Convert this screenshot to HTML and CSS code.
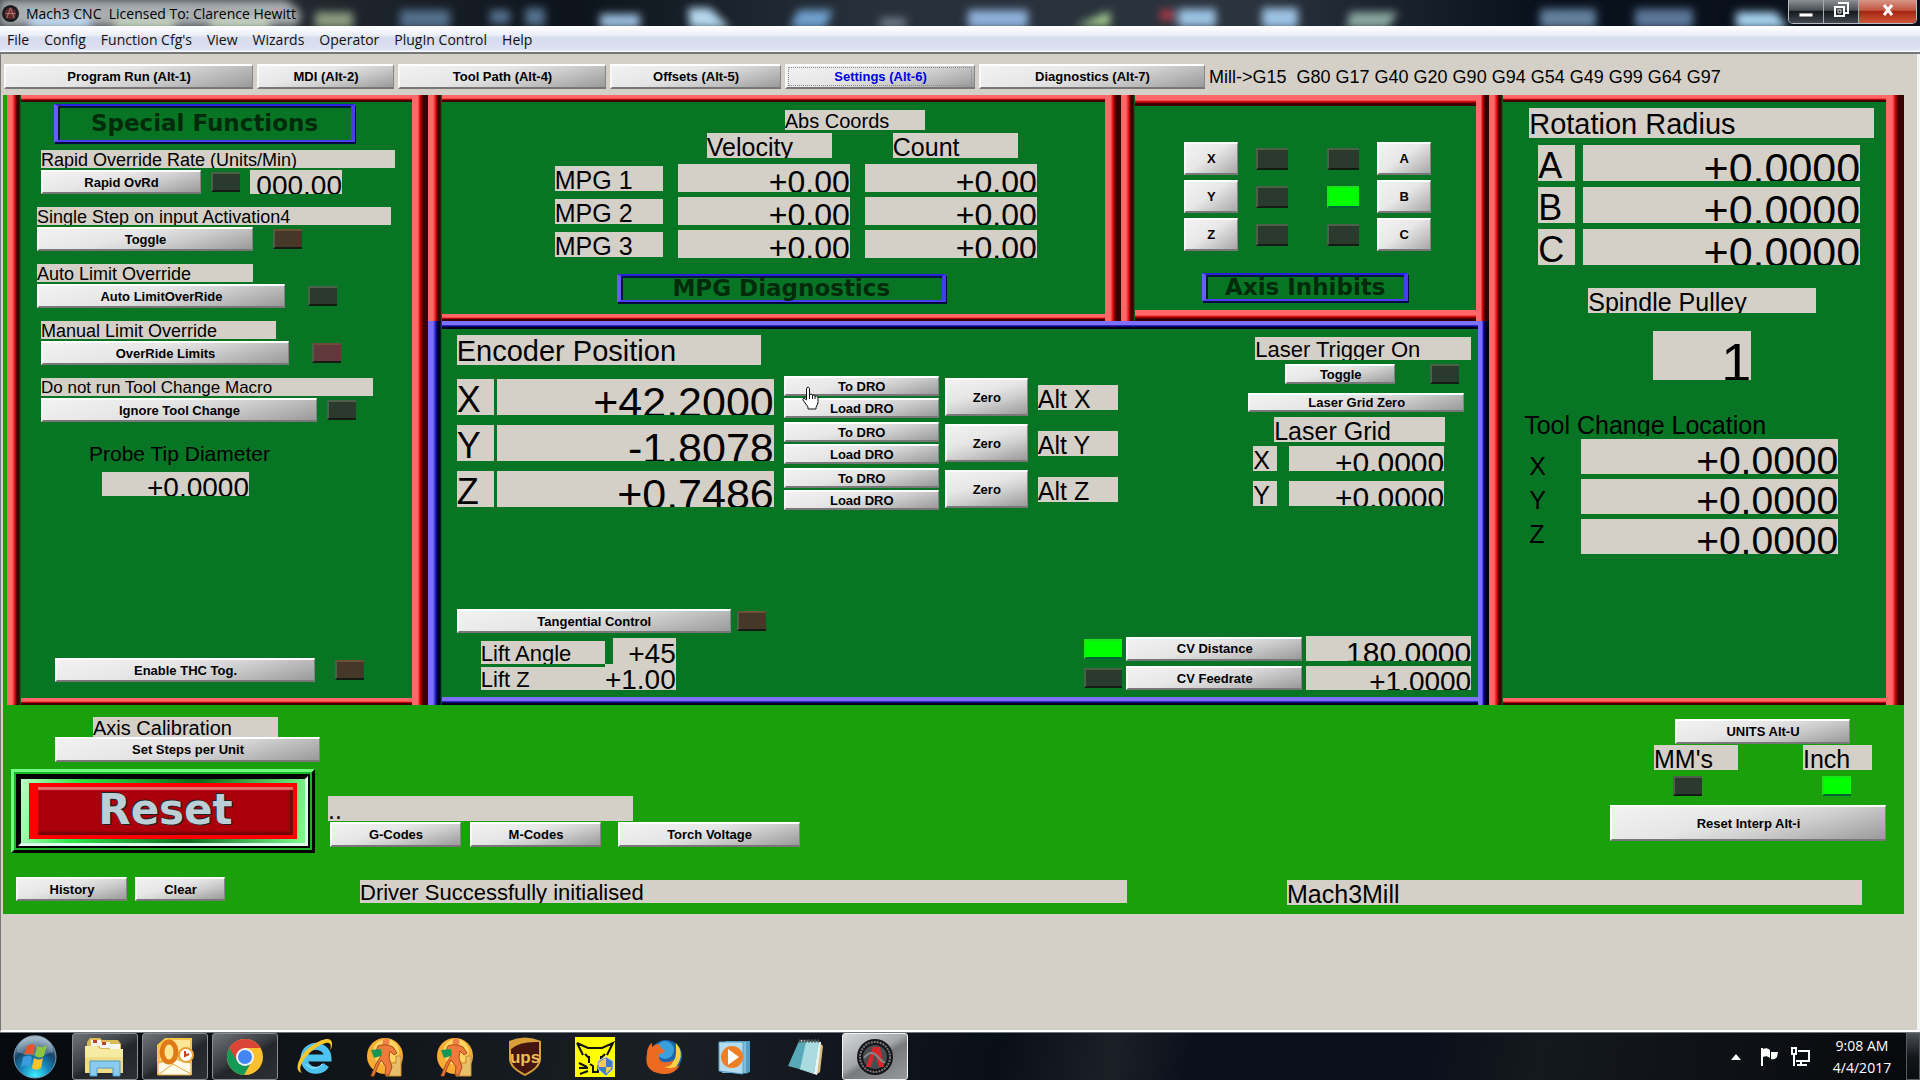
FILE: index.html
```html
<!DOCTYPE html>
<html lang="en">
<head>
  <meta charset="UTF-8">
  <meta name="viewport" content="width=device-width, initial-scale=1.0">
  <title>Mach3 CNC</title>
  <link rel="stylesheet" href="styles.css">
</head>
<body>
  <header class="titlebar">
    <svg class="titlebar-glass" viewBox="0 0 1920 26" preserveAspectRatio="none" aria-hidden="true">
      <defs>
        <filter id="soft" x="-20%" y="-50%" width="140%" height="200%"><feGaussianBlur stdDeviation="4"/></filter>
      </defs>
      <g filter="url(#soft)">
        <path d="M0 0H285Q310 14 295 26H0z" fill="#a9adb0"/>
        <path d="M30 17h60v12H30z" fill="#c4dcf4"/>
        <path d="M115 19h60v10h-60zM210 19h60v10h-60z" fill="#cddcc6"/>
        <path d="M315 12h38v16h-38z" fill="#8d9c80"/>
        <path d="M400 10h50v18h-50zM490 10h20v14h-20zM525 8h20v18h-20z" fill="#53708c"/>
        <path d="M600 14h40v14h-40z" fill="#9cc0de"/>
        <path d="M688 8h22l20 20h-40z" fill="#b5d8ef"/>
        <path d="M798 10h35l-8 18h-35z" fill="#6fa0cf"/>
        <path d="M880 18h26v10h-26z" fill="#6f7d89"/>
        <path d="M968 10h60v18h-60z" fill="#8fb1dc"/>
        <path d="M1075 26l35-15v15z" fill="#a4cc90"/>
        <path d="M1160 10h14v10h-14z" fill="#b23a48"/>
        <path d="M1178 9h38v18h-38zM1262 8h36v20h-36z" fill="#9cc3e4"/>
        <path d="M1350 12h48l-10 16h-42z" fill="#8aa7a0"/>
        <path d="M1540 9h56v19h-56z" fill="#64819e"/>
        <path d="M1635 9h58v19h-58z" fill="#5c789a"/>
        <path d="M1736 12h40l12 16h-52z" fill="#a7d2ef"/>
      </g>
    </svg>
    <svg class="app-icon" viewBox="0 0 20 20" aria-hidden="true">
      <circle cx="10" cy="10" r="9" fill="#1c1c1e"/>
      <circle cx="10" cy="10" r="6" fill="#5c2b2c"/>
      <path d="M6 15l4-11 4 11M5 10h10" fill="none" stroke="#b77" stroke-width="1"/>
    </svg>
    <span class="titlebar-text">Mach3 CNC&nbsp; Licensed To: Clarence Hewitt</span>
    <div class="window-controls">
      <button class="win-btn" aria-label="Minimize"><svg viewBox="0 0 20 20"><path d="M3 13h14v4H3z" fill="#fff" stroke="#333"/></svg></button>
      <button class="win-btn" aria-label="Restore"><svg viewBox="0 0 20 20"><path d="M7 3h10v10h-3M4 7h9v9H4z" fill="none" stroke="#fff" stroke-width="2"/><path d="M7 10h3v3H7z" fill="#222" stroke="#ddd"/></svg></button>
      <button class="win-btn win-btn-close" aria-label="Close"><svg viewBox="0 0 20 20"><path d="M6 5l8 10M14 5L6 15" stroke="#fff" stroke-width="3"/></svg></button>
    </div>
  </header>

  <nav class="menubar">
    <a href="#">File</a>
    <a href="#">Config</a>
    <a href="#">Function Cfg's</a>
    <a href="#">View</a>
    <a href="#">Wizards</a>
    <a href="#">Operator</a>
    <a href="#">PlugIn Control</a>
    <a href="#">Help</a>
  </nav>

  <main class="client">
    <div class="tabs">
      <button class="btn tab-run">Program Run (Alt-1)</button>
      <button class="btn tab-mdi">MDI (Alt-2)</button>
      <button class="btn tab-path">Tool Path (Alt-4)</button>
      <button class="btn tab-offsets">Offsets (Alt-5)</button>
      <button class="btn tab-settings active">Settings (Alt-6)</button>
      <button class="btn tab-diag">Diagnostics (Alt-7)</button>
      <span class="modes">Mill-&gt;G15&nbsp; G80 G17 G40 G20 G90 G94 G54 G49 G99 G64 G97</span>
    </div>

    <div class="screen">
      <div class="panels">
        <!-- Special functions -->
        <section class="frame special">
          <h2 class="badge badge-large">Special Functions</h2>
          <div class="functions">
            <div class="function indent">
              <span class="label w-354">Rapid Override Rate (Units/Min)</span>
              <div class="row">
                <button class="btn w-160">Rapid OvRd</button>
                <span class="led"></span>
                <output class="dro dro-28 w-92">000.00</output>
              </div>
            </div>
            <div class="function">
              <span class="label w-354">Single Step on input Activation4</span>
              <div class="row row-20">
                <button class="btn w-216">Toggle</button>
                <span class="led led-brown"></span>
              </div>
            </div>
            <div class="function">
              <span class="label w-216">Auto Limit Override</span>
              <div class="row row-24">
                <button class="btn w-248">Auto LimitOverRide</button>
                <span class="led"></span>
              </div>
            </div>
            <div class="function indent">
              <span class="label w-235">Manual Limit Override</span>
              <div class="row row-24">
                <button class="btn w-248">OverRide Limits</button>
                <span class="led led-red"></span>
              </div>
            </div>
            <div class="function indent">
              <span class="label label-17 w-332">Do not run Tool Change Macro</span>
              <div class="row">
                <button class="btn w-276">Ignore Tool Change</button>
                <span class="led"></span>
              </div>
            </div>
          </div>
          <div class="probe">
            <span class="label label-21 label-clear">Probe Tip Diameter</span>
            <output class="dro dro-28 w-147">+0.0000</output>
          </div>
          <div class="row row-20 thc">
            <button class="btn w-260">Enable THC Tog.</button>
            <span class="led led-brown"></span>
          </div>
        </section>

        <div class="middle">
          <div class="middle-top">
            <!-- MPG diagnostics -->
            <section class="frame mpg">
              <span class="label label-20 abs-coords">Abs Coords</span>
              <div class="mpg-heads">
                <span class="label label-25">Velocity</span>
                <span class="label label-25">Count</span>
              </div>
              <div class="mpg-grid">
                <span class="label label-25">MPG 1</span>
                <output class="dro dro-32">+0.00</output>
                <output class="dro dro-32">+0.00</output>
                <span class="label label-25">MPG 2</span>
                <output class="dro dro-32">+0.00</output>
                <output class="dro dro-32">+0.00</output>
                <span class="label label-25">MPG 3</span>
                <output class="dro dro-32">+0.00</output>
                <output class="dro dro-32">+0.00</output>
              </div>
              <h2 class="badge badge-mpg">MPG Diagnostics</h2>
            </section>

            <!-- Axis inhibits -->
            <section class="frame frame-thick inhibits">
              <div class="inhibit-grid">
                <button class="btn">X</button><span class="led"></span><span class="led"></span><button class="btn">A</button>
                <button class="btn">Y</button><span class="led"></span><span class="led led-on"></span><button class="btn">B</button>
                <button class="btn">Z</button><span class="led"></span><span class="led"></span><button class="btn">C</button>
              </div>
              <h2 class="badge badge-inhibits">Axis Inhibits</h2>
            </section>
          </div>

          <!-- Encoder position -->
          <section class="frame frame-blue encoder">
            <div class="encoder-top">
              <div>
                <span class="label label-29 encoder-title">Encoder Position</span>
                <div class="axis-rows">
                  <div class="axis-row">
                    <div class="readout">
                      <span class="label label-36">X</span>
                      <output class="dro dro-43">+42.2000</output>
                    </div>
                    <div class="actions">
                      <button class="btn">To DRO</button>
                      <button class="btn">Load DRO</button>
                      <button class="btn btn-zero">Zero</button>
                      <svg class="pointer" viewBox="0 0 17 24" aria-hidden="true">
                        <path d="M5 1.500Q7 .5 7.500 2.500V9L9 8q1 0 1.500 1.500L12 9q1 .5 1 1.500l1.500-.5q1.500.5 1.500 2v5l-2 4.500V23H6v-2L1 14q-.5-2 1-2l2.500 2V3z" fill="#fff" stroke="#111"/>
                        <path d="M7.500 9v4M10.500 9.500v3.500M13 10.500V13" stroke="#111"/>
                      </svg>
                    </div>
                    <span class="label label-25 alt">Alt X</span>
                  </div>
                  <div class="axis-row">
                    <div class="readout">
                      <span class="label label-36">Y</span>
                      <output class="dro dro-43">-1.8078</output>
                    </div>
                    <div class="actions">
                      <button class="btn">To DRO</button>
                      <button class="btn">Load DRO</button>
                      <button class="btn btn-zero">Zero</button>
                    </div>
                    <span class="label label-25 alt">Alt Y</span>
                  </div>
                  <div class="axis-row">
                    <div class="readout">
                      <span class="label label-36">Z</span>
                      <output class="dro dro-43">+0.7486</output>
                    </div>
                    <div class="actions">
                      <button class="btn">To DRO</button>
                      <button class="btn">Load DRO</button>
                      <button class="btn btn-zero">Zero</button>
                    </div>
                    <span class="label label-25 alt">Alt Z</span>
                  </div>
                </div>
              </div>

              <div class="laser">
                <span class="label label-22 laser-trigger">Laser Trigger On</span>
                <div class="laser-toggle">
                  <button class="btn">Toggle</button>
                  <span class="led"></span>
                </div>
                <button class="btn laser-zero">Laser Grid Zero</button>
                <span class="label label-25 laser-title">Laser Grid</span>
                <div class="laser-rows">
                  <span class="label label-25">X</span>
                  <output class="dro dro-30">+0.0000</output>
                  <span class="label label-25">Y</span>
                  <output class="dro dro-30">+0.0000</output>
                </div>
              </div>
            </div>

            <div class="encoder-bottom">
              <div>
                <div class="row row-6">
                  <button class="btn w-274">Tangential Control</button>
                  <span class="led led-brown"></span>
                </div>
                <div class="lift">
                  <span class="label label-22">Lift Angle</span>
                  <output class="dro dro-28 lift-angle">+45</output>
                  <span class="label label-22">Lift Z</span>
                  <output class="dro dro-28">+1.00</output>
                </div>
              </div>
              <div class="cv">
                <span class="led led-on"></span>
                <button class="btn">CV Distance</button>
                <output class="dro dro-30">180.0000</output>
                <span class="led"></span>
                <button class="btn">CV Feedrate</button>
                <output class="dro dro-28">+1.0000</output>
              </div>
            </div>
          </section>
        </div>

        <!-- Rotation radius and tool change -->
        <section class="frame rotation">
          <span class="label label-29 rotation-title">Rotation Radius</span>
          <div class="radius">
            <span class="label label-36">A</span>
            <output class="dro dro-43">+0.0000</output>
            <span class="label label-36">B</span>
            <output class="dro dro-43">+0.0000</output>
            <span class="label label-36">C</span>
            <output class="dro dro-43">+0.0000</output>
          </div>
          <span class="label label-25 pulley-title">Spindle Pulley</span>
          <output class="dro pulley">1</output>
          <span class="label label-25 label-clear toolchange-title">Tool Change Location</span>
          <div class="toolchange">
            <div class="toolchange-axes"><span>X</span><span>Y</span><span>Z</span></div>
            <div class="toolchange-values">
              <output class="dro dro-39">+0.0000</output>
              <output class="dro dro-39">+0.0000</output>
              <output class="dro dro-39">+0.0000</output>
            </div>
          </div>
        </section>
      </div>

      <div class="controls">
        <div class="calibration">
          <span class="label label-20">Axis Calibration</span>
          <button class="btn">Set Steps per Unit</button>
          <button class="reset"><span class="reset-ring"><span class="reset-face">Reset</span></span></button>
        </div>
        <div class="codes">
          <span class="label label-25 w-305">..</span>
          <div class="code-buttons">
            <button class="btn w-131">G-Codes</button>
            <button class="btn w-131">M-Codes</button>
            <button class="btn btn-torch">Torch Voltage</button>
          </div>
        </div>
        <div class="units">
          <button class="btn btn-units">UNITS Alt-U</button>
          <div class="unit-leds">
            <div class="unit"><span class="label label-25 unit-mm">MM's</span><span class="led"></span></div>
            <div class="unit"><span class="label label-25 unit-inch">Inch</span><span class="led led-on"></span></div>
          </div>
          <button class="btn btn-interp">Reset Interp Alt-i</button>
        </div>
      </div>

      <div class="status">
        <button class="btn btn-history">History</button>
        <button class="btn btn-clear">Clear</button>
        <span class="label label-22 status-message">Driver Successfully initialised</span>
        <span class="label label-25 status-profile">Mach3Mill</span>
      </div>
    </div>
  </main>

  <footer class="taskbar">
    <button class="task" aria-label="Start">
      <svg width="44" height="44" viewBox="0 0 44 44">
        <defs>
          <radialGradient id="orb" cx=".5" cy=".95" r=".9"><stop offset="0" stop-color="#3ff0ff"/><stop offset=".4" stop-color="#1585b8"/><stop offset=".7" stop-color="#16456b"/><stop offset="1" stop-color="#8aa5b8"/></radialGradient>
        </defs>
        <circle cx="22" cy="22" r="21" fill="url(#orb)" stroke="#6d9cb5"/>
        <path d="M4 17a18 17 0 0 1 36 0q-18 7-36 0z" fill="#fff" opacity=".25"/>
        <path d="M14 11q4-3 8-1l-2 10q-4-3-9 0z" fill="#e8542b"/>
        <path d="M24 11q5 3 10-1l-3 11q-4 3-9 0z" fill="#8cc63f"/>
        <path d="M10 22q5-3 9 0l-2 10q-4-3-9 0z" fill="#3d9be0"/>
        <path d="M21 23q5 3 9 0l-2 10q-5 3-9 0z" fill="#fdc52c"/>
      </svg>
    </button>
    <button class="task open" aria-label="Explorer">
      <svg width="42" height="40" viewBox="0 0 42 40">
        <path d="M3 5l3-4h10l2 2h16l3 4v29H3z" fill="#d9ba55"/>
        <path d="M7 3h10v6H7zM16 5h10v6H16zM26 7h10v6H26z" fill="#f4f6ee"/>
        <path d="M9 3h4v3H9zM18 5h4v3h-4z" fill="#b5452e"/>
        <path d="M1 9h12l3 3h23v24H1z" fill="#f0dc85"/>
        <path d="M1 9h12l3 3h23v8H1z" fill="#f7eaa2"/>
        <path d="M6 24h30v15h-7v-8H13v8H6z" fill="#8ccbf0" stroke="#4d9acb"/>
      </svg>
    </button>
    <button class="task open" aria-label="Outlook">
      <svg width="40" height="40" viewBox="0 0 40 40">
        <path d="M2 8l8-7h27v37H2z" fill="#f6c648"/>
        <path d="M5 9l7-6h23v20H5z" fill="#fde695"/>
        <path d="M3 26l16-4 17 4v12H3z" fill="#fffbe9" stroke="#e3a83b"/>
        <path d="M3 38l15-11 18 10" fill="none" stroke="#e3a83b"/>
        <ellipse cx="14" cy="15" rx="7" ry="10" fill="none" stroke="#e07a16" stroke-width="5"/>
        <circle cx="31" cy="18" r="7" fill="#fff" stroke="#e6a139" stroke-width="2"/>
        <path d="M30 14v5l4-2" fill="none" stroke="#cc4125" stroke-width="2"/>
      </svg>
    </button>
    <button class="task open" aria-label="Chrome">
      <svg width="38" height="38" viewBox="0 0 38 38">
        <circle cx="19" cy="19" r="18" fill="#fbc02d"/>
        <path d="M3.400 10A18 18 0 0 0 18 37l8-14-7-4z" fill="#149956"/>
        <path d="M3.400 10A18 18 0 0 1 34.600 10H19l-8 13z" fill="#db4437"/>
        <circle cx="19" cy="19" r="9" fill="#f4f4f4"/>
        <circle cx="19" cy="19" r="7" fill="#4285f4"/>
      </svg>
    </button>
    <button class="task" aria-label="Internet Explorer">
      <svg width="40" height="40" viewBox="0 0 40 40">
        <path d="M31 28A12 12 0 1 1 33 21H11" fill="none" stroke="#4fc3f0" stroke-width="7"/>
        <path d="M27 27A10 10 0 0 1 11 27" fill="none" stroke="#b5ecff" stroke-width="1"/>
        <path d="M7 36C-3 34 5 16 18 8 28 1 38-1 37 8c0 2-1 4-2 5 2-6 0-9-7-6C16 11 0 30 7 36z" fill="#f8c62c"/>
      </svg>
    </button>
    <button class="task" aria-label="Worker 1">
      <svg width="40" height="40" viewBox="0 0 40 40">
        <circle cx="20" cy="19" r="18" fill="#f8ac31"/><circle cx="21" cy="15" r="13" fill="#fdd45e"/>
        <path d="M25 26h6v-7h5v20H21v-8z" fill="#e8bf6b" stroke="#c98c2d"/>
        <circle cx="21" cy="5" r="3.500" fill="#ef8248"/>
        <path d="M13 9q7-3 15 1l4 6-3 2-4-4-1 7 3 9-3 8h-4l1-8-5-7-4 8-3 8H6l5-12 5-8v-5l-6 3z" fill="#ee7a3b" stroke="#a84c1a"/>
        <path d="M6 13l10-1v7l-7 2z" fill="#189657"/>
      </svg>
    </button>
    <button class="task" aria-label="Worker 2">
      <svg width="40" height="40" viewBox="0 0 40 40">
        <circle cx="20" cy="19" r="18" fill="#f8ac31"/><circle cx="21" cy="15" r="13" fill="#fdd45e"/>
        <path d="M25 26h6v-7h5v20H21v-8z" fill="#e8bf6b" stroke="#c98c2d"/>
        <circle cx="21" cy="5" r="3.500" fill="#ef8248"/>
        <path d="M13 9q7-3 15 1l4 6-3 2-4-4-1 7 3 9-3 8h-4l1-8-5-7-4 8-3 8H6l5-12 5-8v-5l-6 3z" fill="#ee7a3b" stroke="#a84c1a"/>
        <path d="M6 13l10-1v7l-7 2z" fill="#189657"/>
      </svg>
    </button>
    <button class="task" aria-label="UPS">
      <svg width="34" height="40" viewBox="0 0 34 40">
        <path d="M1 4Q17-3 33 4v18q0 9-16 17Q1 31 1 22z" fill="#d9a03a"/>
        <path d="M3 12Q12 4 31 5v17q0 8-14 15Q3 30 3 22z" fill="#43170f"/>
        <text x="17" y="26" class="ups-text">ups</text>
      </svg>
    </button>
    <button class="task" aria-label="Wildcat">
      <svg width="40" height="40" viewBox="0 0 40 40">
        <path d="M0 0h40v40H0z" fill="#ff0"/>
        <path d="M2 6l6 12M2 6l11 5h14l11-5-6 12M10 17l4 4M30 17l-4 4M14 19v7M26 19v7M15 27l3 2v6h5v-6l3-2M4 26l8 4M4 31h9M5 37l8-3" fill="none" stroke="#111" stroke-width="2"/>
        <path d="M31 20l7 4v8l-7 7-8-7v-8z" fill="#3e7bc4" stroke="#ccd6df"/>
        <path d="M31 21v9h-7v-5zM31 30h6l-1 2-5 5z" fill="#f1ce4b"/>
      </svg>
    </button>
    <button class="task" aria-label="Firefox">
      <svg width="38" height="38" viewBox="0 0 38 38">
        <circle cx="20" cy="18" r="16" fill="#1c64ad"/><circle cx="19" cy="12" r="9" fill="#3aa0dc"/>
        <path d="M30 5q8 9 3 19t-15 12q-8-4 1-8 11-3 11-13z" fill="#fcd144"/>
        <path d="M3 8q2-3 3-3v4q4-4 8-2 0 4 5 5-1 4-6 4-1 7 5 8 5 1 9-2 0 7-9 7 8 3 16-2-5 9-15 9Q-3 35 1 16q0-5 2-8z" fill="#ed6b21"/>
      </svg>
    </button>
    <button class="task" aria-label="Media Player">
      <svg width="36" height="36" viewBox="0 0 36 36">
        <path d="M8 2h25v31l-5 2z" fill="#559cc0"/><path d="M5 3h24v31H5z" fill="#80bedd"/>
        <path d="M2 3h24v32L2 32z" fill="#b3dcef" stroke="#5aa2c8"/>
        <circle cx="15" cy="18" r="11" fill="#f07e24"/><path d="M11 10l11 8-11 8z" fill="#fff"/>
      </svg>
    </button>
    <button class="task" aria-label="Notepad">
      <svg width="38" height="38" viewBox="0 0 38 38">
        <path d="M33 4l4 4-3 26-4 3z" fill="#d8bd85"/>
        <path d="M15 2l20 2-4 33-18-6z" fill="#eaf5f6"/>
        <path d="M13 3h20l-5 32L2 28z" fill="#58a9b8"/>
        <path d="M20 4h13l-5 31-14-4z" fill="#a9dbe0"/>
        <path d="M13 3h20" stroke="#555" stroke-width="3" stroke-dasharray="2 1"/>
      </svg>
    </button>
    <button class="task open current" aria-label="Mach3">
      <svg width="40" height="40" viewBox="0 0 40 40">
        <circle cx="20" cy="20" r="18" fill="#151517"/>
        <circle cx="20" cy="20" r="15" fill="none" stroke="#77777a" stroke-width="2" stroke-dasharray="2 1"/>
        <circle cx="20" cy="20" r="12" fill="#4a4d50"/>
        <path d="M11 30l7-20h7l4 20h-5l-4-15-4 15z" fill="#d8262b"/>
        <path d="M9 21q7-9 13-2t8 6" fill="none" stroke="#838a89" stroke-width="2"/>
      </svg>
    </button>

    <div class="tray">
      <svg width="10" height="6" viewBox="0 0 10 6"><path d="M0 6l5-6 5 6z" fill="#fff"/></svg>
      <svg class="tray-flag" width="20" height="20" viewBox="0 0 20 20"><path d="M2 1v18" stroke="#fff" stroke-width="2"/><path d="M3 2q4-2 7 1v8q-3-3-7-1zM11 5h7l-1 5q-2 3-6 2z" fill="#fff"/></svg>
      <svg width="20" height="20" viewBox="0 0 20 20"><path d="M2 1h4v6H2zM4 7v12M8 4h11v10H6M11 14v3M7 18h10" fill="none" stroke="#fff" stroke-width="2"/></svg>
      <div class="clock"><span>9:08 AM</span><span>4/4/2017</span></div>
      <button class="show-desktop" aria-label="Show desktop"></button>
    </div>
  </footer>
</body>
</html>
```

FILE: styles.css
```css
* {
  box-sizing: border-box;
}
body {
  margin: 0;
  min-height: 100vh;
  display: flex;
  flex-direction: column;
  font-family: "Liberation Sans", Arial, sans-serif;
  background-color: #d4d0c8;
  color: #000;
}
button {
  font-family: inherit;
  cursor: pointer;
}

/* Title bar and menu */
.titlebar {
  position: relative;
  display: flex;
  align-items: center;
  gap: 6px;
  height: 26px;
  padding-left: 1px;
  overflow: hidden;
  background: linear-gradient(to right, #3a4046, #0c131b 30%, #27303a 45%, #2b333d 65%, #09111d 80%, #0a1018);
}
.titlebar-glass {
  position: absolute;
  left: 0;
  top: 0;
  width: 100%;
  height: 100%;
}
.app-icon {
  position: relative;
  width: 19px;
  height: 19px;
}
.titlebar-text {
  position: relative;
  font-family: "Open Sans", "Noto Sans", sans-serif;
  font-size: 14px;
  white-space: nowrap;
}
.window-controls {
  position: relative;
  display: flex;
  align-self: flex-start;
  margin-left: auto;
  margin-right: 3px;
  height: 24px;
  border: 1px solid #b7bcc2;
  border-top: none;
  border-radius: 0 0 5px 5px;
  overflow: hidden;
}
.win-btn {
  width: 35px;
  padding: 0;
  border: none;
  border-right: 1px solid #a5abb1;
  background: linear-gradient(#8b9096, #484d54 45%, #15191f 50%, #444a51);
}
.win-btn svg {
  width: 20px;
  height: 20px;
}
.win-btn-close {
  width: 57px;
  border-right: none;
  background: linear-gradient(#d79585, #c25440 45%, #a52410 50%, #cf5a3a);
}
.menubar {
  display: flex;
  align-items: center;
  gap: 15px;
  height: 28px;
  padding: 1px 0 0 7px;
  background: linear-gradient(#fff, #eceff8 35%, #d6dbee 45%, #dce2f2 90%, #fff);
  border-bottom: 2px solid #76777a;
  font-family: "Open Sans", "Noto Sans", sans-serif;
  font-size: 14px;
}
.menubar a {
  color: #111;
  text-decoration: none;
}

/* Shared parts */
.btn {
  height: 24px;
  padding: 0;
  border: 1px solid #858585;
  border-top: 2px solid #fff;
  border-left: 2px solid #f8f8f8;
  border-bottom: 2px solid #777;
  background: linear-gradient(165deg, #f2f2f2, #e6e6e6 40%, #cfcfcf 62%, #9a9a9a);
  color: #000;
  font-size: 13px;
  font-weight: bold;
  white-space: nowrap;
}
.label,
.dro {
  display: block;
  overflow: hidden;
  background-color: #d4d0c8;
  line-height: normal;
  white-space: nowrap;
}
.label {
  height: 18px;
  font-size: 18px;
}
.label-clear {
  background-color: transparent;
}
.label-17 {
  font-size: 17px;
}
.label-20 {
  height: 20px;
  font-size: 20px;
}
.label-21 {
  height: 21px;
  font-size: 21px;
}
.label-22 {
  height: 23px;
  font-size: 22px;
}
.label-25 {
  height: 25px;
  font-size: 25px;
}
.label-29 {
  height: 30px;
  font-size: 29px;
}
.label-36 {
  width: 37px;
  height: 36px;
  font-size: 36px;
}
.dro {
  text-align: right;
}
.dro-28 {
  height: 24px;
  font-size: 28px;
}
.dro-30 {
  height: 25px;
  font-size: 30px;
}
.dro-32 {
  height: 28px;
  font-size: 32px;
}
.dro-39 {
  height: 35px;
  font-size: 39px;
}
.dro-43 {
  height: 36px;
  font-size: 43px;
  line-height: 46px;
}
.led {
  width: 29px;
  height: 20px;
  flex: none;
  background-color: #2a3b2d;
  border: 2px solid #4d6049;
  border-right: none;
  border-bottom-color: #121c12;
}
.led-brown {
  background-color: #463829;
  border-top-color: #6b5136;
}
.led-red {
  background-color: #60393d;
  border-top-color: #6d4a3d;
}
.led-on {
  background-color: #0f0;
  border-color: #1be31b;
  border-bottom-color: #063;
}
.row {
  display: flex;
  align-items: center;
  gap: 10px;
}
.row-6 { gap: 6px; }
.row-20 { gap: 20px; }
.row-24 { gap: 23px; }
.w-92 { width: 92px; }
.w-131 { width: 131px; }
.w-147 { width: 147px; }
.w-160 { width: 160px; }
.w-216 { width: 216px; }
.w-235 { width: 235px; }
.w-248 { width: 248px; }
.w-260 { width: 260px; }
.w-274 { width: 274px; }
.w-276 { width: 276px; }
.w-305 { width: 305px; }
.w-332 { width: 332px; }
.w-354 { width: 354px; }

.badge {
  display: flex;
  align-items: center;
  justify-content: center;
  margin: 0;
  height: 28px;
  border: 2px solid #2a22e0;
  border-left: 4px solid #6a5cff;
  border-right: 4px solid #4a3cf0;
  border-bottom: 2px solid #4a40f0;
  box-shadow: inset 2px 2px 0 #041a3c, 1px 2px 0 #020a40;
  color: #022b0c;
  font-family: "DejaVu Sans", sans-serif;
  font-size: 23px;
  font-weight: bold;
  line-height: 22px;
  white-space: nowrap;
}

/* Bevelled panels, lit from the left and top */
.frame {
  --light: #ff6868;
  --mid: #d80808;
  --dark: #380000;
  --edge: 7px;
  --right: 16px;
  background:
    linear-gradient(to right, var(--light) 5px, var(--mid) 8px, var(--dark) 10px, var(--dark) 12px, #077524) left / 14px 100% no-repeat,
    linear-gradient(to right, var(--light) 35%, var(--mid) 50%, var(--dark) 70%) right / var(--right) 100% no-repeat,
    linear-gradient(var(--light) 45%, var(--mid) 60%, var(--dark) 80%) top / 100% var(--edge) no-repeat,
    linear-gradient(var(--light) 45%, var(--mid) 60%, var(--dark) 80%) bottom / 100% var(--edge) no-repeat,
    #077524;
}
.frame-thick {
  --edge: 11px;
  --right: 13px;
}
.frame-blue {
  --light: #7d70ff;
  --mid: #1410b0;
  --dark: #00001c;
  --edge: 8px;
  --right: 11px;
}

/* Tab row */
.client {
  flex: 1;
  padding: 10px 13px 0 2px;
  border-left: 1px solid #777;
  border-right: 3px solid #f4f4f4;
  border-bottom: 2px solid #fff;
}
.tabs {
  display: flex;
  align-items: center;
  gap: 4px;
  padding: 0 0 6px 1px;
}
.tabs .btn {
  height: 25px;
  flex: 0 1 auto;
}
.tab-run { width: 249px; }
.tab-mdi { width: 137px; }
.tab-path { width: 208px; }
.tab-offsets { width: 171px; }
.tab-settings { width: 190px; }
.tab-diag { width: 226px; }
.tabs .active {
  color: #0000e0;
  outline: 1px dotted #888;
  outline-offset: -4px;
}
.modes {
  padding-top: 2px;
  font-size: 18px;
  white-space: nowrap;
}
.screen {
  background-color: #1aa00b;
}
.panels {
  display: grid;
  grid-template-columns: 421fr 1062fr 415fr;
  padding-left: 4px;
}

/* Special functions */
.special {
  display: flex;
  flex-direction: column;
  padding: 9px 20px 23px 30px;
}
.badge-large {
  width: 301px;
  height: 38px;
  margin-left: 17px;
}
.functions {
  display: grid;
  gap: 13px;
  margin-top: 8px;
}
.function {
  display: grid;
  gap: 2px;
}
.indent {
  margin-left: 4px;
}
.probe {
  display: grid;
  gap: 6px;
  margin: 20px 0 0 52px;
}
.probe .dro {
  margin-left: 13px;
}
.probe .label {
  height: 24px;
}
.thc {
  margin: auto 0 0 18px;
}

/* Centre column */
.middle {
  display: grid;
  grid-template-rows: 226px 1fr;
  min-height: 610px;
}
.middle-top {
  display: grid;
  grid-template-columns: 694fr 368fr;
}
.mpg {
  --right: 16px;
  padding: 15px 20px 0 127px;
}
.abs-coords {
  width: 140px;
  margin-left: 230px;
}
.mpg-heads {
  display: flex;
  gap: 61px;
  margin: 3px 0 6px 152px;
}
.mpg-heads .label {
  width: 125px;
}
.mpg-grid {
  display: grid;
  grid-template-columns: 108px 172px 172px;
  gap: 5px 15px;
  align-items: center;
}
.badge-mpg {
  width: 329px;
  margin: 16px 0 0 62px;
}
.inhibits {
  display: flex;
  flex-direction: column;
  align-items: center;
  justify-content: space-between;
  padding: 47px 0 20px;
}
.inhibit-grid {
  display: grid;
  grid-template-columns: 54px 32px 53px 54px;
  gap: 5px 18px;
  align-items: center;
  margin-left: 4px;
}
.inhibit-grid .btn {
  height: 33px;
  background: linear-gradient(145deg, #f2f2f2, #e8e8e8 45%, #a8a8a8);
}
.inhibit-grid .led {
  width: 32px;
  height: 22px;
}
.inhibit-grid .led + .led {
  margin-left: 21px;
}
.badge-inhibits {
  width: 206px;
}

/* Encoder */
.encoder {
  display: flex;
  flex-direction: column;
  justify-content: space-between;
  padding: 14px 18px 15px 29px;
}
.encoder-top,
.encoder-bottom {
  display: flex;
  justify-content: space-between;
  align-items: flex-start;
}
.encoder-bottom {
  align-items: flex-end;
}
.encoder-title {
  width: 304px;
}
.axis-rows {
  display: grid;
  gap: 4px;
  margin-top: 11px;
}
.axis-row {
  display: flex;
  align-items: center;
  gap: 10px;
}
.readout {
  display: flex;
  gap: 3px;
}
.readout .dro {
  width: 277px;
}
.actions {
  position: relative;
  display: grid;
  grid-template-columns: 155px 83px;
  grid-template-rows: 20px 20px;
  gap: 2px 6px;
}
.actions .btn {
  height: auto;
}
.actions .btn-zero {
  grid-area: 1 / 2 / 3 / 3;
  margin: 2px 0;
}
.pointer {
  position: absolute;
  left: 18px;
  top: 10px;
  width: 17px;
  height: 24px;
}
.alt {
  width: 80px;
}
.laser {
  display: grid;
  width: 223px;
  padding-top: 2px;
}
.laser-trigger {
  width: 216px;
  margin-left: 7px;
}
.laser-toggle {
  display: flex;
  gap: 35px;
  margin: 4px 0 9px 37px;
}
.laser-toggle .btn {
  width: 110px;
  height: 20px;
}
.laser-zero {
  width: 216px;
  height: 19px;
}
.laser-title {
  width: 171px;
  margin: 5px 0 4px 26px;
}
.laser-rows {
  display: grid;
  grid-template-columns: 24px 155px;
  gap: 10px 12px;
  margin-left: 5px;
}
.lift {
  display: grid;
  grid-template-columns: 124px 71px;
  grid-auto-rows: 26px;
  align-items: end;
  margin: 5px 0 0 24px;
}
.lift .dro {
  height: 26px;
}
.lift-angle {
  width: 63px;
  justify-self: end;
}
.cv {
  display: grid;
  grid-template-columns: 38px 176px 165px;
  gap: 5px 4px;
  align-items: center;
}
.cv .led {
  width: 38px;
}

/* Rotation */
.rotation {
  --right: 18px;
  padding: 13px 30px 0 35px;
}
.rotation-title {
  margin-left: 5px;
}
.radius {
  display: grid;
  grid-template-columns: 37px 277px;
  gap: 6px 8px;
  margin: 7px 0 23px 14px;
}
.pulley-title {
  width: 228px;
  margin: 0 0 18px 64px;
}
.pulley {
  width: 98px;
  height: 49px;
  margin-left: 129px;
  font-size: 54px;
}
.toolchange-title {
  margin: 31px 0 3px;
}
.toolchange {
  display: flex;
  gap: 35px;
  padding-left: 5px;
}
.toolchange-axes {
  display: grid;
  width: 17px;
  padding-top: 10px;
  align-content: start;
  font-size: 25px;
  line-height: 34px;
}
.toolchange-values {
  display: grid;
  gap: 5px;
  width: 257px;
}

/* Lower controls */
.controls {
  display: flex;
  padding: 12px 18px 0 8px;
}
.calibration {
  display: flex;
  flex-direction: column;
  align-items: flex-start;
  width: 309px;
}
.calibration .label {
  width: 185px;
  margin-left: 82px;
}
.calibration .btn {
  width: 265px;
  height: 25px;
  margin: 0 0 7px 44px;
}
.reset {
  width: 304px;
  height: 84px;
  padding: 4px;
  border: 3px solid #000;
  border-color: #6dff7d #000 #000 #6dff7d;
  background-color: #19b52b;
}
.reset-ring {
  display: block;
  height: 100%;
  padding: 4px 8px;
  border: 3px solid #000;
  border-color: #000 #dfe #dfe #000;
  outline: 2px solid #000;
  background: linear-gradient(100deg, #baffc4, #2ee84a 20%, #0a6b1a 60%, #7dff8e);
}
.reset-face {
  display: block;
  height: 100%;
  border: 4px solid #f00;
  border-left-width: 9px;
  background-color: #aa000c;
  box-shadow: inset 0 3px 1px #e57070, inset -3px -3px 2px #700008;
  color: #bccfd6;
  font-family: "DejaVu Sans", sans-serif;
  font-size: 42px;
  font-weight: bold;
  line-height: 46px;
  text-shadow: 1px 1px #222, -1px -1px #222;
}
.codes {
  align-self: flex-end;
  margin: 0 auto 6px 8px;
}
.code-buttons {
  display: flex;
  gap: 9px;
  margin: 1px 0 0 2px;
}
.code-buttons .btn {
  height: 25px;
}
.btn-torch {
  width: 182px;
  margin-left: 8px;
}
.units {
  width: 276px;
  padding-top: 2px;
}
.btn-units {
  display: block;
  width: 175px;
  height: 25px;
  margin-left: 65px;
}
.unit-leds {
  display: flex;
  gap: 65px;
  margin: 1px 0 9px 44px;
}
.unit {
  display: flex;
  flex-direction: column;
  gap: 6px;
}
.unit .led {
  margin-left: 19px;
}
.unit-mm {
  width: 84px;
}
.unit-inch {
  width: 69px;
}
.btn-interp {
  width: 276px;
  height: 36px;
}
.status {
  display: flex;
  align-items: flex-start;
  padding: 24px 42px 9px 13px;
}
.btn-history {
  width: 111px;
}
.btn-clear {
  width: 90px;
  margin-left: 8px;
}
.status-message {
  flex: 767;
  margin: 3px 160px 0 135px;
}
.status-profile {
  flex: 575;
  margin-top: 3px;
}

/* Taskbar */
.taskbar {
  display: flex;
  align-items: stretch;
  gap: 4px;
  height: 48px;
  padding-left: 2px;
  border-top: 1px solid #6c747c;
  background: linear-gradient(100deg, #060a0e, #1a1f26 35%, #090f16 52%, #1b2027 58%, #0a0f1a 62%, #0a0f1a 74%, #14191e 80%, #07090c);
}
.task {
  display: flex;
  align-items: center;
  justify-content: center;
  width: 66px;
  padding: 0;
  border: 1px solid transparent;
  border-radius: 3px;
  background: none;
}
.task.open {
  border-color: #8a8f94;
  background: linear-gradient(150deg, #6f7377, #393d41 45%, #23272b 55%, #2c3034);
}
.task.current {
  border-color: #f4f4f4;
  background: linear-gradient(150deg, #d4d6d8, #a4a7aa 45%, #77797c 55%, #96999c);
}
.ups-text {
  font-family: "Liberation Sans", sans-serif;
  font-size: 17px;
  font-weight: bold;
  text-anchor: middle;
  fill: #f0bd55;
}
.tray {
  display: flex;
  align-items: center;
  margin-left: auto;
}
.tray-flag {
  margin: 0 10px 0 19px;
}
.clock {
  display: grid;
  width: 96px;
  padding-left: 8px;
  color: #fff;
  font-family: "Open Sans", "Noto Sans", sans-serif;
  font-size: 14px;
  line-height: 22px;
  text-align: center;
}
.show-desktop {
  align-self: stretch;
  width: 14px;
  border: 1px solid #555b61;
  background: linear-gradient(#4a4f54, #14171a 50%, #0a0c0e);
}
```
